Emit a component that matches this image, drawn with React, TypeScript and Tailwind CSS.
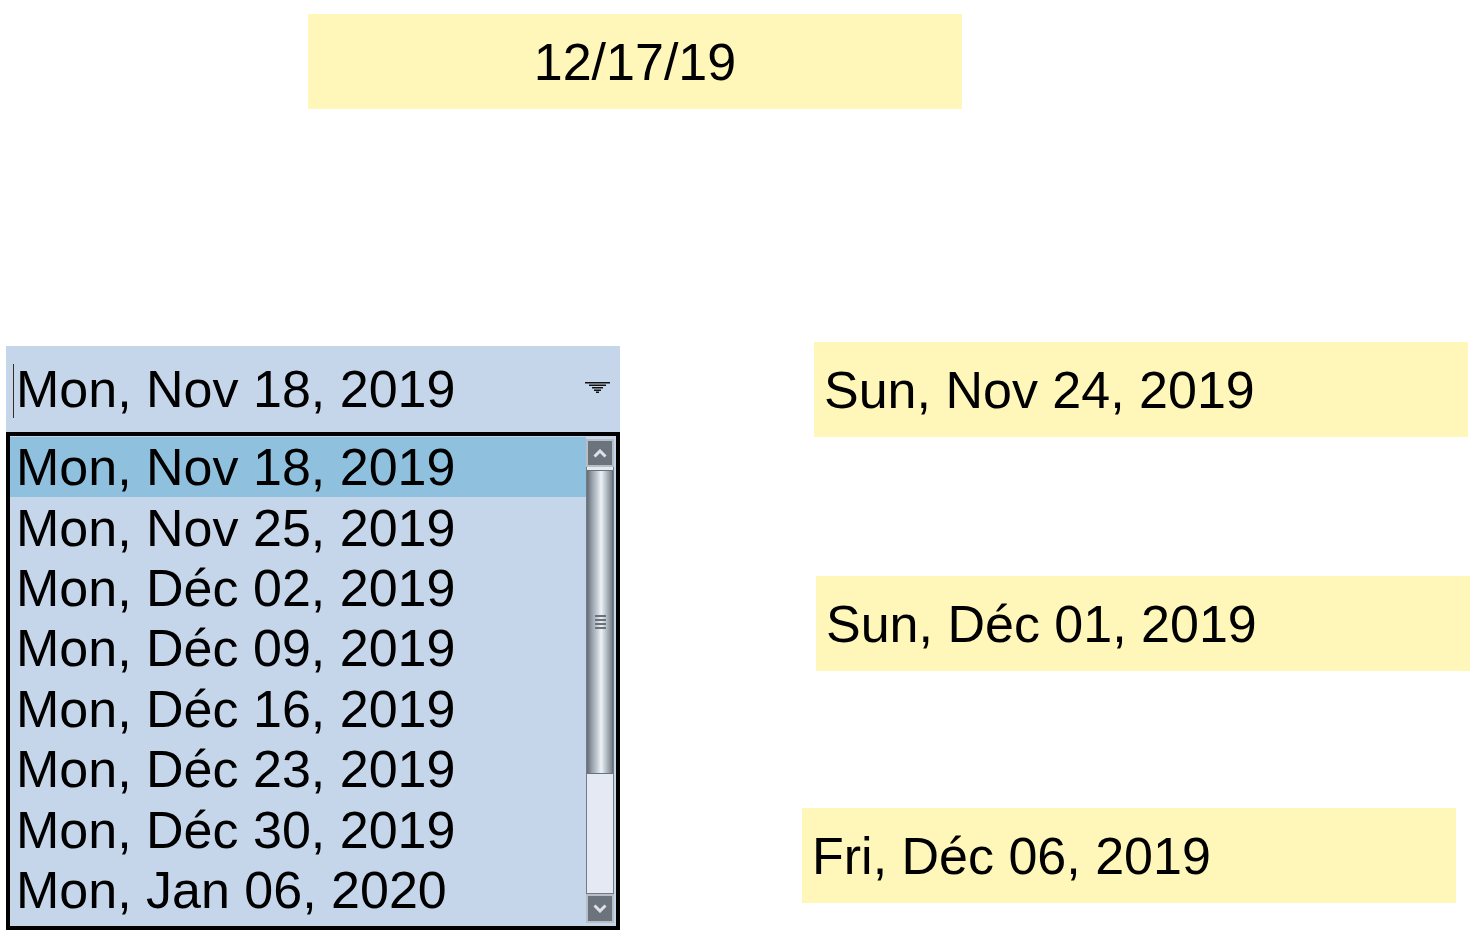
import React from "react";

const rows = [
  "Mon, Nov 18, 2019",
  "Mon, Nov 25, 2019",
  "Mon, Déc 02, 2019",
  "Mon, Déc 09, 2019",
  "Mon, Déc 16, 2019",
  "Mon, Déc 23, 2019",
  "Mon, Déc 30, 2019",
  "Mon, Jan 06, 2020",
];

function Chevron({ up }: { up: boolean }) {
  return (
    <svg width="14" height="9" viewBox="0 0 14 9">
      <path
        d={up ? "M1.5 7.5 L7 2 L12.5 7.5" : "M1.5 1.5 L7 7 L12.5 1.5"}
        fill="none"
        stroke="#dde1e6"
        strokeWidth="3"
      />
    </svg>
  );
}

export default function App() {
  return (
    <div className="w-[1482px] h-[938px] bg-white text-black font-['Liberation_Sans',Arial,sans-serif] overflow-hidden">
      <div className="pt-[14px] pl-[308px]">
        <div className="w-[654px] h-[95px] bg-[#fff6b9] flex items-center justify-center text-[52px]">
          12/17/19
        </div>
      </div>

      <div className="flex mt-[233px]">
        {/* Combo box */}
        <div className="ml-[6px] mt-[4px] w-[614px] flex flex-col">
          <div className="h-[86px] bg-[#c6d6ea] flex items-center pl-[7px] text-[52px]">
            <span className="w-px h-[54px] bg-[#3a2a20] mr-[2px] mt-[3px]" />
            <span>Mon, Nov 18, 2019</span>
            <svg className="ml-auto mr-[10px] mb-[4px]" width="25" height="11" viewBox="0 0 25 11">
              <rect x="0" y="0" width="25" height="1.5" fill="#111" />
              <rect x="4" y="2.5" width="17" height="1.5" fill="#111" />
              <rect x="7" y="5" width="11" height="1.5" fill="#111" />
              <rect x="9" y="7.5" width="7" height="1.5" fill="#111" />
              <rect x="11" y="9.5" width="3" height="1.5" fill="#111" />
            </svg>
          </div>
          <div className="h-[498px] border-4 border-black bg-[#c6d6ea] flex">
            <div className="flex-1 pt-[1px] flex flex-col">
              {rows.map((r, i) => (
                <div
                  key={r}
                  className={`h-[60.43px] flex items-center pl-[6px] text-[52px] whitespace-nowrap ${
                    i === 0 ? "bg-[#8fc1de]" : ""
                  }`}
                >
                  {r}
                </div>
              ))}
            </div>
            <div className="w-[28px] mr-[2px] pt-[3px] pb-[3px] flex flex-col">
              <div className="h-[28px] border-2 border-[#b9bec4] bg-[#6b737c] flex items-center justify-center">
                <Chevron up />
              </div>
              <div className="flex-1 flex flex-col border-x border-b border-[#737b84] bg-[#e4e9f3]">
                <div className="mt-[3px] h-[304px] border border-[#69717a] bg-[linear-gradient(to_right,#6d757e,#9ba4ae_18%,#c3cbd4_38%,#eef2f6_55%,#b5bdc6_76%,#79828b)] flex flex-col items-center justify-center gap-[2px]">
                  <div className="w-[11px] h-[2px] bg-[#6a727b]" />
                  <div className="w-[11px] h-[2px] bg-[#6a727b]" />
                  <div className="w-[11px] h-[2px] bg-[#6a727b]" />
                  <div className="w-[11px] h-[2px] bg-[#6a727b]" />
                </div>
              </div>
              <div className="h-[29px] border-2 border-[#b9bec4] bg-[#6b737c] flex items-center justify-center">
                <Chevron up={false} />
              </div>
            </div>
          </div>
        </div>

        {/* Right boxes */}
        <div className="flex flex-col">
          <div className="ml-[194px] w-[654px] h-[95px] bg-[#fff6b9] flex items-center pl-[10px] text-[52px] whitespace-nowrap">
            Sun, Nov 24, 2019
          </div>
          <div className="ml-[196px] mt-[139px] w-[654px] h-[95px] bg-[#fff6b9] flex items-center pl-[10px] text-[52px] whitespace-nowrap">
            Sun, Déc 01, 2019
          </div>
          <div className="ml-[182px] mt-[137px] w-[654px] h-[95px] bg-[#fff6b9] flex items-center pl-[10px] text-[52px] whitespace-nowrap">
            Fri, Déc 06, 2019
          </div>
        </div>
      </div>
    </div>
  );
}
